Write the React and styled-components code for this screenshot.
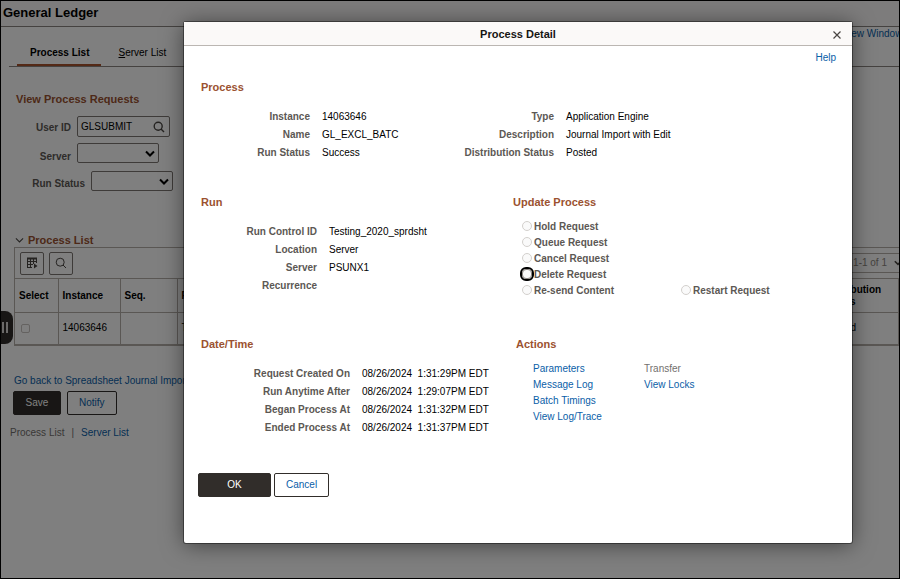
import styled, { createGlobalStyle, css } from "styled-components";

const GlobalStyle = createGlobalStyle`
  * {
    box-sizing: border-box;
  }
  body {
    margin: 0;
    overflow: hidden;
    background: #fff;
    color: #000;
    font: 10px/12px "Liberation Sans", Arial, sans-serif;
  }
  button, input, select {
    font: inherit;
    color: inherit;
    margin: 0;
  }
  h1, h2, h3, dl, dd, ul {
    margin: 0;
    padding: 0;
  }
  li {
    list-style: none;
  }
`;

const Frame = styled.div`
  position: relative;
  min-height: 100vh;
  overflow: hidden;
  &::after {
    content: "";
    position: absolute;
    inset: 0;
    border: 1px solid #000;
    z-index: 3;
    pointer-events: none;
  }
`;

const Link = styled.a`
  color: ${({ $muted }) => ($muted ? "#73706d" : "#0a60a8")};
  text-decoration: none;
  white-space: nowrap;
`;

const SectionTitle = styled.h2`
  font-size: 11px;
  line-height: 14px;
  font-weight: 700;
  color: #9b5230;
`;

const Button = styled.button`
  height: 24px;
  min-width: ${({ $wide }) => ($wide ? "73px" : "48px")};
  padding: 0 11px;
  border: 1px solid #312d2a;
  border-radius: 2px;
  background: #fff;
  color: #0a60a8;
  ${({ $primary }) =>
    $primary &&
    css`
      background: #312d2a;
      color: #fff;
    `}
`;

/* ---------- page behind the dialog ---------- */

const PageHeader = styled.header`
  height: 27px;
  padding: 5px 3px;
  background: #fbf9f8;
  border-bottom: 1px solid #8b8580;
  h1 {
    font-size: 13px;
    line-height: 16px;
  }
`;

const TabBar = styled.nav`
  display: flex;
  justify-content: space-between;
  height: 40px;
  margin-left: 9px;
  padding-left: 8px;
  border-bottom: 1px solid #8b8580;
`;

const Tabs = styled.div`
  display: flex;
  align-items: flex-end;
`;

const Tab = styled.a`
  padding: 0 12px 3px 13px;
  height: 25px;
  color: #000;
  text-decoration: none;
  font-weight: ${({ $active }) => ($active ? 700 : 400)};
  border-bottom: 2px solid ${({ $active }) => ($active ? "#a8522c" : "transparent")};
  margin-right: 4px;
  line-height: 24px;
`;

const WindowLink = styled.div`
  width: 56px;
  padding-top: 1px;
`;

const Content = styled.main`
  padding: 25px 1px 0 10px;
`;

const Filters = styled.form`
  padding: 0 6px;
`;

const Field = styled.div`
  display: flex;
  align-items: center;
  gap: 6px;
  margin-top: ${({ $gap }) => $gap}px;
  label {
    width: ${({ $label }) => $label}px;
    text-align: right;
    font-weight: 700;
    color: #5c5854;
    padding-top: ${({ $drop = 2 }) => $drop}px;
  }
`;

const Lookup = styled.div`
  display: flex;
  align-items: center;
  width: 93px;
  height: 21px;
  padding: 0 4px 0 3px;
  border: 1px solid #7c7773;
  border-radius: 2px;
  input {
    flex: 1;
    min-width: 0;
    padding: 0;
    border: 0;
    background: none;
  }
  button {
    display: flex;
    padding: 0;
    border: 0;
    background: none;
  }
`;

const Select = styled.div`
  display: grid;
  width: 82px;
  height: 20px;
  select,
  svg {
    grid-area: 1 / 1;
  }
  select {
    appearance: none;
    border: 1px solid #7c7773;
    border-radius: 2px;
    background: none;
  }
  svg {
    place-self: center end;
    margin-right: 4px;
    pointer-events: none;
  }
`;

const GridTitle = styled.div`
  display: flex;
  align-items: center;
  gap: 4px;
  padding-left: 5px;
  margin-top: 42px;
`;

const GridPanel = styled.section`
  margin-left: 4px;
  border: 1px solid #b5aea8;
  border-width: 1px 0 2px 1px;
`;

const GridToolbar = styled.div`
  display: flex;
  align-items: center;
  gap: 5px;
  height: 30px;
  padding-left: 5px;
`;

const IconButton = styled.button`
  display: flex;
  align-items: center;
  justify-content: center;
  width: 24px;
  height: 23px;
  padding: 0;
  border: 1px solid #7c7773;
  border-radius: 2px;
  background: none;
`;

const Pager = styled.button`
  display: flex;
  align-items: center;
  justify-content: flex-end;
  gap: 7px;
  width: 120px;
  height: 20px;
  margin-left: auto;
  margin-right: -4px;
  padding: 0;
  border: 1px solid #b5aea8;
  background: none;
  color: #8b8580;
`;

const Table = styled.table`
  width: 100%;
  border-collapse: collapse;
  table-layout: fixed;
  th,
  td {
    padding: 0 4px;
    text-align: left;
    border: 1px solid #b5aea8;
    border-left: 0;
    border-bottom: 0;
  }
  th {
    height: 34px;
  }
  td {
    height: 31px;
  }
  input {
    display: block;
    appearance: none;
    width: 9px;
    height: 9px;
    margin: 0 2px;
    border: 1px solid #c9c5c1;
    border-radius: 2px;
  }
`;

const PageFooter = styled.footer`
  display: flex;
  flex-direction: column;
  margin-top: 29px;
`;

const Row = styled.div`
  display: flex;
  gap: ${({ $gap }) => $gap}px;
`;

const BackRow = styled(Row)`
  padding-left: 4px;
`;

const SaveRow = styled(Row)`
  padding: 4px 3px 12px;
`;

const SideHandle = styled.button`
  position: absolute;
  left: 0;
  top: 311px;
  display: flex;
  align-items: center;
  gap: 2px;
  width: 13px;
  height: 33px;
  padding: 0 0 0 2px;
  border: 0;
  border-radius: 0 8px 8px 0;
  background: #312d2a;
  i {
    width: 2px;
    height: 11px;
    background: #d8d5d2;
  }
`;

/* ---------- dialog ---------- */

const Overlay = styled.div`
  position: absolute;
  inset: 0;
  z-index: 2;
  padding: 22px 48px 0 184px;
  background: rgba(0, 0, 0, 0.5);
`;

const Dialog = styled.section`
  background: #fff;
  border-radius: 2px;
  box-shadow: 0 0 0 1px rgba(0, 0, 0, 0.4), 0 2px 22px rgba(0, 0, 0, 0.5);
`;

const DialogHeader = styled.header`
  display: grid;
  grid-template-columns: 30px 1fr 30px;
  align-items: center;
  height: 24px;
  background: #fbf9f8;
  border-bottom: 1px solid #bbb6b2;
  h2 {
    grid-column: 2;
    text-align: center;
    font-size: 11px;
    color: #161513;
  }
  button {
    display: flex;
    justify-content: center;
    padding: 2px 0 0;
    border: 0;
    background: none;
  }
`;

const DialogBody = styled.div`
  display: flex;
  flex-direction: column;
  padding: 6px 16px 46px 17px;
`;

const HelpRow = styled.div`
  text-align: right;
  margin-bottom: 16px;
`;

const Columns = styled.div`
  display: grid;
  grid-template-columns: ${({ $split }) => $split}px 1fr;
  margin-bottom: ${({ $after }) => $after}px;
`;

const Facts = styled.dl`
  display: grid;
  grid-template-columns: ${({ $label }) => $label}px 1fr;
  column-gap: 12px;
  margin-top: 14px;
  line-height: 18px;
  white-space: pre;
  dt {
    text-align: right;
    font-weight: 700;
    color: #5c5854;
  }
`;

const RadioGrid = styled.div`
  display: grid;
  grid-template-columns: 159px 1fr;
  margin: 10px 0 0 9px;
`;

const RadioLabel = styled.label`
  display: flex;
  align-items: center;
  gap: 2px;
  height: 16px;
  grid-column: ${({ $col }) => $col};
  font-weight: 700;
  color: #5c5854;
  input {
    appearance: none;
    width: 10px;
    height: 10px;
    margin-bottom: 2px;
    border: 1px solid #d3d0cd;
    border-radius: 50%;
    background: #fafafa;
  }
  input:enabled {
    outline: 2px solid #000;
    border-radius: 4px;
    border-color: #8b8580;
  }
`;

const LinkColumns = styled.div`
  display: grid;
  grid-template-columns: 111px 1fr;
  margin: 10px 0 0 17px;
  line-height: 16px;
`;

const DialogButtons = styled.div`
  display: flex;
  gap: 3px;
  margin-left: -3px;
`;

const processLeft = [
  ["Instance", "14063646"],
  ["Name", "GL_EXCL_BATC"],
  ["Run Status", "Success"],
];

const processRight = [
  ["Type", "Application Engine"],
  ["Description", "Journal Import with Edit"],
  ["Distribution Status", "Posted"],
];

const run = [
  ["Run Control ID", "Testing_2020_sprdsht"],
  ["Location", "Server"],
  ["Server", "PSUNX1"],
  ["Recurrence", ""],
];

const dates = [
  ["Request Created On", "08/26/2024  1:31:29PM EDT"],
  ["Run Anytime After", "08/26/2024  1:29:07PM EDT"],
  ["Began Process At", "08/26/2024  1:31:32PM EDT"],
  ["Ended Process At", "08/26/2024  1:31:37PM EDT"],
];

const updates = [
  { text: "Hold Request", col: 1 },
  { text: "Queue Request", col: 1 },
  { text: "Cancel Request", col: 1 },
  { text: "Delete Request", col: 1, enabled: true },
  { text: "Re-send Content", col: 1 },
  { text: "Restart Request", col: 2 },
];

function FactList({ items, label }) {
  return (
    <Facts $label={label}>
      {items.map(([name, value]) => [
        <dt key={name}>{name}</dt>,
        <dd key={name + "-value"}>{value}</dd>,
      ])}
    </Facts>
  );
}

function SearchIcon({ size = 12, weight = 1 }) {
  return (
    <svg width={size} height={size} viewBox="0 0 12 12" fill="none" stroke="#4a4643" strokeWidth={weight}>
      <circle cx="5.2" cy="5.2" r="4" />
      <path d="M8 8 11 11" />
    </svg>
  );
}

function Caret({ width = 10, color = "#000", weight = 2 }) {
  return (
    <svg width={width} height={width * 0.7} viewBox="0 0 10 7" fill="none" stroke={color} strokeWidth={weight}>
      <path d="M1 1.5 5 5.5 9 1.5" />
    </svg>
  );
}

function GridIcon() {
  return (
    <svg width="12" height="12" viewBox="0 0 12 12" fill="none" stroke="#4a4643">
      <path d="M1 1.5h10" strokeWidth="2" />
      <path d="M1 4.5h10M1 7.5h6M1 10.5h5M1.5 1v10M4.5 1v10M7.5 1v6M10.5 1v5" />
      <path d="M8 6.5 11.5 9 8 11.5z" fill="#4a4643" stroke="none" />
    </svg>
  );
}

function SelectField({ id, label, width, gap, drop }) {
  return (
    <Field $label={width} $gap={gap} $drop={drop}>
      <label htmlFor={id}>{label}</label>
      <Select>
        <select id={id} />
        <Caret />
      </Select>
    </Field>
  );
}

function Page() {
  return (
    <>
      <PageHeader>
        <h1>General Ledger</h1>
      </PageHeader>
      <TabBar>
        <Tabs>
          <Tab href="#process" $active>
            Process List
          </Tab>
          <Tab href="#server">
            <u>S</u>erver List
          </Tab>
        </Tabs>
        <WindowLink>
          <Link href="#new">New Window</Link>
        </WindowLink>
      </TabBar>
      <Content>
        <Filters>
          <SectionTitle>View Process Requests</SectionTitle>
          <Field $label={55} $gap={10}>
            <label htmlFor="user">User ID</label>
            <Lookup>
              <input id="user" defaultValue="GLSUBMIT" />
              <button type="button" aria-label="Look up User ID">
                <SearchIcon weight={1.4} />
              </button>
            </Lookup>
          </Field>
          <SelectField id="server" label="Server" width={55} gap={6} drop={8} />
          <SelectField id="status" label="Run Status" width={69} gap={8} drop={6} />
        </Filters>
        <GridTitle>
          <Caret width={9} color="#4a4643" weight={1.2} />
          <SectionTitle>Process List</SectionTitle>
        </GridTitle>
        <GridPanel>
          <GridToolbar>
            <IconButton aria-label="Grid actions">
              <GridIcon />
            </IconButton>
            <IconButton aria-label="Find">
              <SearchIcon />
            </IconButton>
            <Pager>
              1-1 of 1 <Caret width={8} color="#4a4643" />
            </Pager>
          </GridToolbar>
          <Table>
            <colgroup>
              <col width="43" />
              <col width="62" />
              <col width="57" />
              <col />
              <col width="78" />
            </colgroup>
            <thead>
              <tr>
                <th>Select</th>
                <th>Instance</th>
                <th>Seq.</th>
                <th>Process Type</th>
                <th>Distribution Status</th>
              </tr>
            </thead>
            <tbody>
              <tr>
                <td>
                  <input type="checkbox" aria-label="Select 14063646" disabled />
                </td>
                <td>14063646</td>
                <td />
                <td>Type</td>
                <td>Posted</td>
              </tr>
            </tbody>
          </Table>
        </GridPanel>
        <PageFooter>
          <BackRow>
            <Link href="#back">Go back to Spreadsheet Journal Import</Link>
          </BackRow>
          <SaveRow $gap={6}>
            <Button $primary>Save</Button>
            <Button>Notify</Button>
          </SaveRow>
          <Row $gap={7}>
            <Link as="span" $muted>
              Process List
            </Link>
            <Link as="span" $muted>
              |
            </Link>
            <Link href="#server">Server List</Link>
          </Row>
        </PageFooter>
      </Content>
      <SideHandle aria-label="Open side panel">
        <i />
        <i />
      </SideHandle>
    </>
  );
}

function ProcessDetail() {
  return (
    <Dialog role="dialog" aria-labelledby="detail-title">
      <DialogHeader>
        <h2 id="detail-title">Process Detail</h2>
        <button aria-label="Close">
          <svg width="8" height="8" viewBox="0 0 8 8" stroke="#4a4643" strokeWidth="1.2">
            <path d="M0.5 0.5 7.5 7.5M7.5 0.5 0.5 7.5" />
          </svg>
        </button>
      </DialogHeader>
      <DialogBody>
        <HelpRow>
          <Link href="#help">Help</Link>
        </HelpRow>
        <SectionTitle>Process</SectionTitle>
        <Columns $split={253} $after={33}>
          <FactList items={processLeft} label={109} />
          <FactList items={processRight} label={100} />
        </Columns>
        <Columns $split={312} $after={38}>
          <section>
            <SectionTitle>Run</SectionTitle>
            <FactList items={run} label={116} />
          </section>
          <section>
            <SectionTitle>Update Process</SectionTitle>
            <RadioGrid>
              {updates.map(({ text, col, enabled }) => (
                <RadioLabel key={text} $col={col}>
                  <input type="radio" name="update" disabled={!enabled} />
                  {text}
                </RadioLabel>
              ))}
            </RadioGrid>
          </section>
        </Columns>
        <Columns $split={315} $after={36}>
          <section>
            <SectionTitle>Date/Time</SectionTitle>
            <FactList items={dates} label={149} />
          </section>
          <section>
            <SectionTitle>Actions</SectionTitle>
            <LinkColumns>
              <ul>
                <li><Link href="#parameters">Parameters</Link></li>
                <li><Link href="#log">Message Log</Link></li>
                <li><Link href="#timings">Batch Timings</Link></li>
                <li><Link href="#trace">View Log/Trace</Link></li>
              </ul>
              <ul>
                <li><Link as="span" $muted>Transfer</Link></li>
                <li><Link href="#locks">View Locks</Link></li>
              </ul>
            </LinkColumns>
          </section>
        </Columns>
        <DialogButtons>
          <Button $primary $wide>
            OK
          </Button>
          <Button>Cancel</Button>
        </DialogButtons>
      </DialogBody>
    </Dialog>
  );
}

export default function App() {
  return (
    <Frame>
      <GlobalStyle />
      <Page />
      <Overlay>
        <ProcessDetail />
      </Overlay>
    </Frame>
  );
}
